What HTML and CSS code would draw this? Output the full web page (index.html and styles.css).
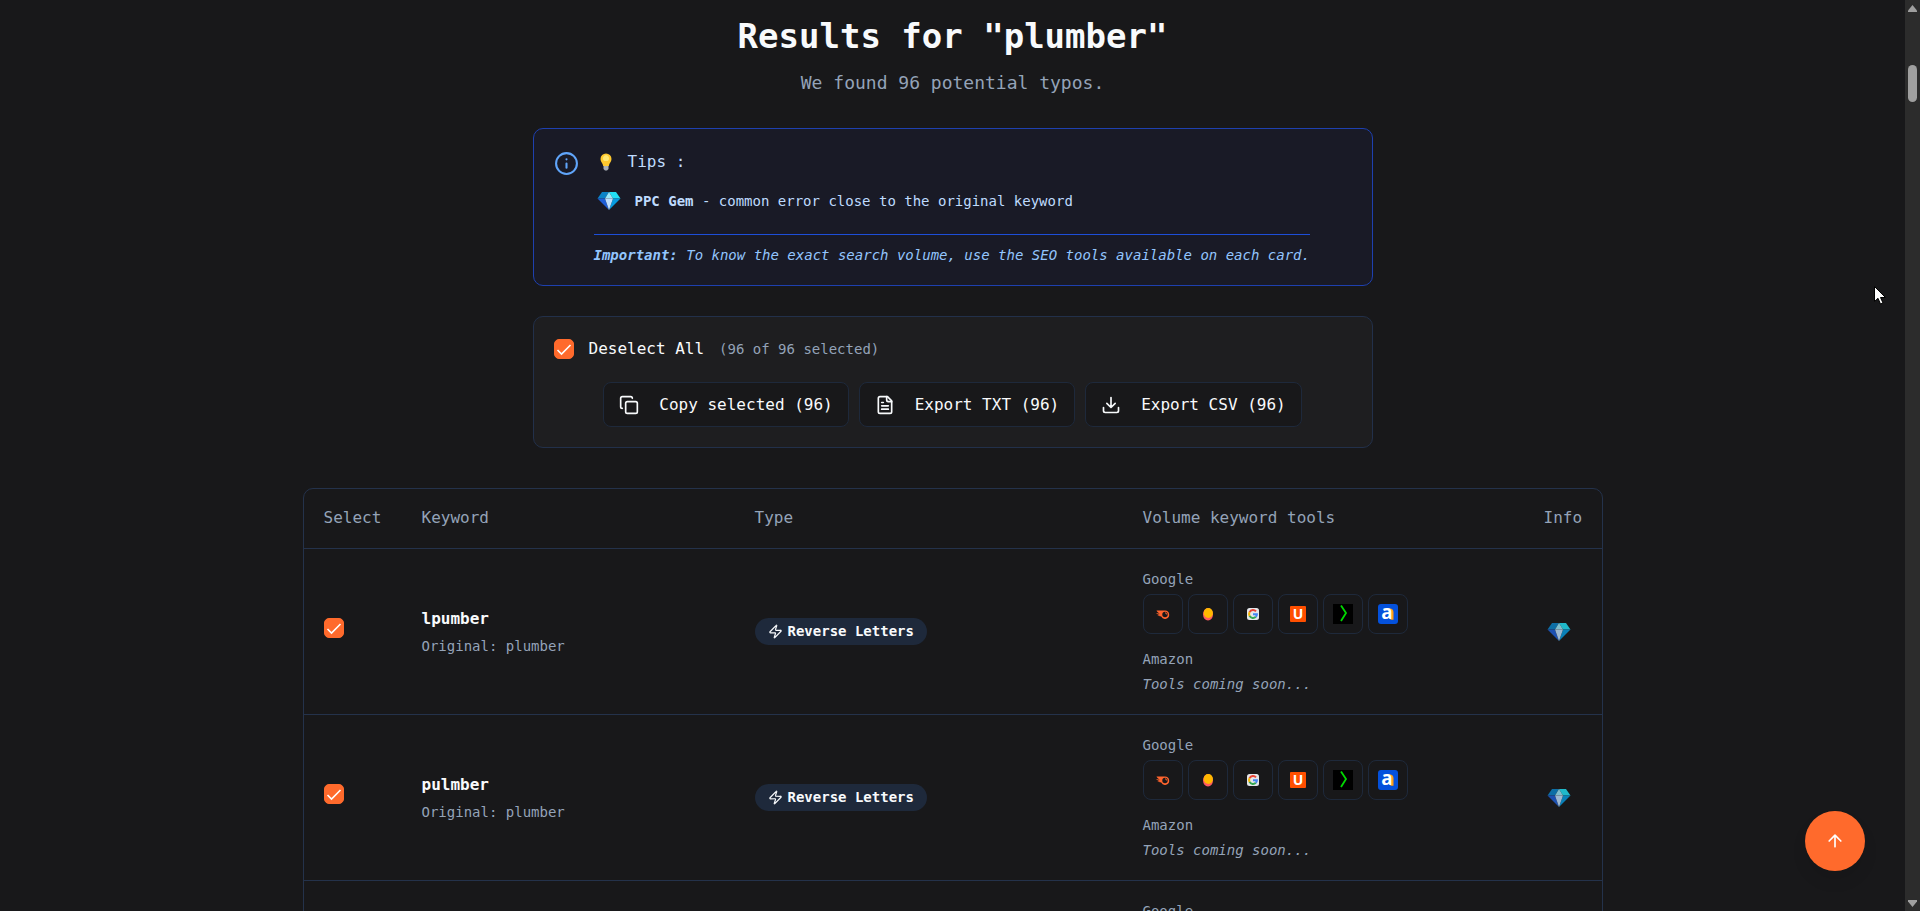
FILE: index.html
```
<!DOCTYPE html>
<html lang="en">

<head>
  <meta charset="UTF-8">
  <meta name="viewport" content="width=device-width, initial-scale=1.0">
  <title>Results for "plumber"</title>
  <link rel="stylesheet" href="styles.css">
</head>

<body>
  <svg class="sprite" aria-hidden="true">
    <symbol id="gem" viewBox="0 0 24 20">
      <path d="M5 1h7L8 7.5H.5z" fill="#0b84c8" />
      <path d="M12 1h7l4.500 6.500H16z" fill="#22e0f5" />
      <path d="M.5 7.500H8L12 19z" fill="#1f5fd6" />
      <path d="M16 7.500h7.500L12 19z" fill="#069be0" />
      <path d="M12 1l4 6.500H8z" fill="#9be8fb" />
      <path d="M8 7.500h8L12 19z" fill="#bfe0ff" />
    </symbol>
    <symbol id="zap" viewBox="0 0 24 24">
      <path d="M4 14a1 1 0 0 1-.78-1.630l9.900-10.200a.5.5 0 0 1 .86.460l-1.920 6.020A1 1 0 0 0 13 10h7a1 1 0 0 1 .78 1.630l-9.900 10.200a.5.5 0 0 1-.86-.460l1.920-6.020A1 1 0 0 0 11 14z" fill="none" stroke="currentColor" stroke-width="2" stroke-linejoin="round" />
    </symbol>
    <symbol id="semrush" viewBox="0 0 20 20">
      <path d="M3.500 6.500h8.500a4.200 4.200 0 1 1-3.800 6c-1.700-.2-3-.7-4-1.300 1 .1 2 .1 2.600-.1-1.500-.4-3-1.200-4-2 1.500.4 3 .6 4 .4-1.400-.6-2.700-1.700-3.300-3z" fill="#ff642d" />
      <circle cx="12" cy="10.500" r="2.700" fill="#18181a" />
      <path d="M12 8.800a1.700 1.700 0 0 1 1.700 1.700" fill="none" stroke="#ff642d" stroke-width="1" />
    </symbol>
    <symbol id="suggest" viewBox="0 0 20 20">
      <ellipse cx="10" cy="10.300" rx="5" ry="6.200" fill="#ff5a5f" />
      <ellipse cx="10.300" cy="9" rx="4.600" ry="5" fill="#ffb800" />
    </symbol>
    <symbol id="trends" viewBox="0 0 20 20">
      <rect x="4" y="4" width="12" height="12" rx="2.500" fill="#e4e6ea" />
      <g fill="none" stroke-width="2">
        <path d="M13 7.400A3.900 3.900 0 0 0 6.600 8.100" stroke="#ea4335" />
        <path d="M6.600 8.100a3.900 3.900 0 0 0 0 3.800" stroke="#f4b400" />
        <path d="M6.600 11.900a3.900 3.900 0 0 0 6.200.9" stroke="#34a853" />
        <path d="M12.800 12.800a3.900 3.900 0 0 0 1.100-2.600H10" stroke="#4285f4" />
      </g>
    </symbol>
    <symbol id="ubersuggest" viewBox="0 0 20 20">
      <rect x="2" y="2" width="16" height="16" rx="1" fill="#ff4f00" />
      <text x="10" y="15" class="mark mark-u">U</text>
    </symbol>
    <symbol id="chevron" viewBox="0 0 20 20">
      <path d="M0 0h20v20H0z" fill="#000" />
      <path d="M8 1.500l5 7.500-5 8" fill="none" stroke="#00d800" stroke-width="1.800" />
    </symbol>
    <symbol id="answer" viewBox="0 0 20 20">
      <rect width="20" height="20" rx="3" fill="#0451dc" />
      <path d="M11 4.500q4.500-.5 4.500 4v7.300h-3z" fill="#ff9c1a" />
      <text x="9" y="15" class="mark mark-a">a</text>
    </symbol>
  </svg>

  <main>
    <header class="results-header">
      <h1>Results for "plumber"</h1>
      <p>We found 96 potential typos.</p>
    </header>

    <section class="panel tips">
      <svg class="info-icon" viewBox="0 0 24 24" fill="none" stroke="currentColor" stroke-width="2" stroke-linecap="round">
        <circle cx="12" cy="12" r="10" />
        <path d="M12 16v-4M12 8h.01" />
      </svg>
      <div>
        <h2>
          <svg class="bulb" viewBox="0 0 12 18">
            <path d="M6 .5a5.500 5.500 0 0 1 5.500 5.500c0 3-2.300 4-2.700 7H3.200C2.800 10 .5 9 .5 6A5.500 5.500 0 0 1 6 .5z" fill="#ffc92e" />
            <path d="M6 2a3.500 3.500 0 0 1 2 6H4a3.500 3.500 0 0 1 2-6z" fill="#ffe873" />
            <path d="M3.500 13h5v3L7 17.500H5L3.500 16z" fill="#aab0b8" />
          </svg>
          Tips :
        </h2>
        <p class="tip"><svg class="gem"><use href="#gem" /></svg><span><strong>PPC Gem</strong> - common error close to the original keyword</span></p>
        <p class="note"><strong>Important:</strong> To know the exact search volume, use the SEO tools available on each card.</p>
      </div>
    </section>

    <section class="panel actions">
      <div class="select-all">
        <input type="checkbox" id="select-all" checked>
        <label for="select-all">Deselect All</label>
        <span class="count">(96 of 96 selected)</span>
      </div>
      <div class="buttons">
        <button type="button">
          <svg class="icon" viewBox="0 0 24 24">
            <rect x="8" y="8" width="14" height="14" rx="2" />
            <path d="M4 16c-1.100 0-2-.9-2-2V4c0-1.100.9-2 2-2h10c1.100 0 2 .9 2 2" />
          </svg>
          Copy selected (96)
        </button>
        <button type="button">
          <svg class="icon" viewBox="0 0 24 24">
            <path d="M15 2H6a2 2 0 0 0-2 2v16a2 2 0 0 0 2 2h12a2 2 0 0 0 2-2V7z" />
            <path d="M14 2v4a2 2 0 0 0 2 2h4M10 9H8M16 13H8M16 17H8" />
          </svg>
          Export TXT (96)
        </button>
        <button type="button">
          <svg class="icon" viewBox="0 0 24 24">
            <path d="M21 15v4a2 2 0 0 1-2 2H5a2 2 0 0 1-2-2v-4M7 10l5 5 5-5M12 15V3" />
          </svg>
          Export CSV (96)
        </button>
      </div>
    </section>

    <div class="table-wrap">
      <table>
        <colgroup>
          <col class="col-select">
          <col class="col-keyword">
          <col class="col-type">
          <col class="col-tools">
          <col class="col-info">
        </colgroup>
        <thead>
          <tr>
            <th>Select</th>
            <th>Keyword</th>
            <th>Type</th>
            <th>Volume keyword tools</th>
            <th>Info</th>
          </tr>
        </thead>
        <tbody id="rows"></tbody>
      </table>
    </div>
  </main>

  <div class="scrollbar" aria-hidden="true">
    <svg class="arrow" viewBox="0 0 9 7"><path d="M4.500 0L9 5.500V7H0V5.500z" /></svg>
    <div class="thumb"></div>
    <svg class="arrow arrow-down" viewBox="0 0 9 7"><path d="M4.500 7L9 1.500V0H0v1.500z" /></svg>
  </div>

  <button type="button" class="to-top" aria-label="Back to top">
    <svg class="icon" viewBox="0 0 24 24"><path d="M5 12l7-7 7 7M12 19V5" /></svg>
  </button>

  <svg class="cursor" viewBox="0 0 12 19" aria-hidden="true">
    <path d="M.5.5v15l3.500-3.200 2.500 5.700 2.500-1-2.500-5.500h5z" fill="#fff" stroke="#000" />
  </svg>

  <script>
    'use strict'
    const tools = ['semrush', 'suggest', 'trends', 'ubersuggest', 'chevron', 'answer']
    const keywords = ['lpumber', 'pulmber', 'plmuber']

    document.getElementById('rows').innerHTML = keywords.map((keyword) => `
      <tr>
        <td><input type="checkbox" aria-label="Select ${keyword}" checked></td>
        <td>
          <div class="keyword">${keyword}</div>
          <div class="original">Original: plumber</div>
        </td>
        <td><span class="badge"><svg><use href="#zap" /></svg>Reverse Letters</span></td>
        <td class="tools">
          <p>Google</p>
          <div class="tool-list">
            ${tools.map((tool) => `<a href="#" aria-label="${tool}"><svg><use href="#${tool}" /></svg></a>`).join('')}
          </div>
          <p>Amazon</p>
          <p class="soon">Tools coming soon...</p>
        </td>
        <td class="info"><svg class="gem"><use href="#gem" /></svg></td>
      </tr>`).join('')
  </script>
</body>

</html>
```
FILE: styles.css
```
* {
  box-sizing: border-box;
  margin: 0;
}

body {
  display: flex;
  height: 100vh;
  overflow: hidden;
  background: #18181a;
  color: #f8fafc;
  font: 16px/24px "DejaVu Sans Mono", "Liberation Mono", monospace;
}

main {
  flex: 1;
  padding: 12px 20px 0;
}

svg {
  display: block;
  flex: none;
}

.sprite {
  display: none;
}

.icon {
  width: 20px;
  height: 20px;
  fill: none;
  stroke: currentColor;
  stroke-width: 2;
  stroke-linecap: round;
  stroke-linejoin: round;
}

.gem {
  width: 24px;
  height: 20px;
}

.results-header {
  text-align: center;
}

h1 {
  font-size: 34px;
  line-height: 48px;
}

.results-header p {
  margin-top: 8px;
  color: #94a3b8;
  font-size: 18px;
  line-height: 30px;
}

.panel {
  max-width: 840px;
  margin: 30px auto 0;
  padding: 20px;
  border: 1px solid #22304a;
  border-radius: 10px;
}

.tips {
  display: flex;
  gap: 15px;
  border-color: #1e40af;
  background: #191a26;
  color: #bfdbfe;
}

.info-icon {
  width: 25px;
  height: 25px;
  margin-top: 2px;
  color: #60a5fa;
}

h2 {
  display: flex;
  align-items: center;
  gap: 16px;
  padding-left: 6px;
  font-size: 16px;
  font-weight: normal;
  line-height: 25px;
}

.bulb {
  width: 12px;
  height: 18px;
}

.tip {
  display: flex;
  align-items: center;
  gap: 14px;
  margin: 14px 0 20px;
  padding-left: 3px;
  font-size: 14px;
  line-height: 26px;
}

.note {
  padding-top: 10px;
  border-top: 1px solid #1d4ed8;
  color: #93c5fd;
  font-size: 14px;
  font-style: italic;
  line-height: 20px;
}

.actions {
  background: #1e1e20;
}

.select-all {
  display: flex;
  align-items: center;
  gap: 15px;
  line-height: 24px;
}

.count {
  color: #94a3b8;
  font-size: 14px;
}

input[type="checkbox"] {
  display: block;
  appearance: none;
  width: 20px;
  height: 20px;
  border: 1px solid #ff6a2c;
  border-radius: 5px;
}

input[type="checkbox"]:checked {
  background: #ff6a2c url("data:image/svg+xml,%3Csvg xmlns='http://www.w3.org/2000/svg' viewBox='0 0 20 20'%3E%3Cpath d='M3.5 11l4 4 9-9' fill='none' stroke='white' stroke-width='1.6'/%3E%3C/svg%3E") center / 20px;
}

.buttons {
  display: flex;
  justify-content: center;
  gap: 10px;
  margin-top: 21px;
}

.buttons button {
  display: flex;
  align-items: center;
  gap: 20px;
  height: 45px;
  padding: 0 15px;
  border: 1px solid #1e293b;
  border-radius: 8px;
  background: #18181a;
  color: inherit;
  font: inherit;
}

.table-wrap {
  max-width: 1300px;
  margin: 40px auto 0;
  border: 1px solid #24324b;
  border-radius: 10px;
}

table {
  width: 100%;
  border-collapse: collapse;
  table-layout: fixed;
}

.col-select {
  width: 98px;
}

.col-keyword {
  width: 333px;
}

.col-type {
  width: 388px;
}

.col-tools {
  width: 401px;
}

.col-info {
  width: 78px;
}

tr {
  border-bottom: 1px solid #24324b;
}

th {
  height: 59px;
  padding: 0 0 0 20px;
  color: #94a3b8;
  font-weight: normal;
  text-align: left;
}

td {
  padding: 20px 0 20px 20px;
  vertical-align: middle;
}

td input[type="checkbox"] {
  margin-bottom: 6px;
}

.keyword {
  font-weight: bold;
}

.original {
  margin-top: 5px;
  color: #94a3b8;
  font-size: 14px;
  line-height: 20px;
}

.badge {
  display: flex;
  align-items: center;
  gap: 5px;
  width: fit-content;
  height: 27px;
  padding: 0 13px;
  border-radius: 14px;
  background: #1e293b;
  font-size: 14px;
  font-weight: bold;
}

.badge svg {
  width: 15px;
  height: 15px;
}

.tools p {
  color: #94a3b8;
  font-size: 14px;
  line-height: 20px;
}

.tools .soon {
  margin-top: 5px;
  font-style: italic;
}

.tool-list {
  display: flex;
  gap: 5px;
  margin: 5px 0 15px;
}

.tool-list a {
  display: flex;
  align-items: center;
  justify-content: center;
  width: 40px;
  height: 40px;
  border: 1px solid #1e293b;
  border-radius: 8px;
}

.tool-list svg {
  width: 20px;
  height: 20px;
}

.mark {
  fill: #fff;
  font-family: "Open Sans", sans-serif;
  font-weight: bold;
  text-anchor: middle;
}

.mark-u {
  font-size: 14px;
}

.mark-a {
  font-size: 19px;
}

.info .gem {
  margin: 2px 0 0 3px;
  opacity: 0.8;
}

.to-top {
  position: fixed;
  right: 55px;
  bottom: 40px;
  display: flex;
  align-items: center;
  justify-content: center;
  width: 60px;
  height: 60px;
  border: 0;
  border-radius: 50%;
  background: #ff6a2c;
  box-shadow: 0 10px 15px rgba(0, 0, 0, 0.08);
  color: #fff;
}

.scrollbar {
  display: flex;
  flex-direction: column;
  align-items: center;
  width: 15px;
  padding: 5px 0 4px;
  background: #2c2c2c;
}

.thumb {
  width: 9px;
  height: 37px;
  margin-top: 53px;
  border-radius: 5px;
  background: #9f9f9f;
}

.arrow {
  width: 9px;
  height: 7px;
  fill: #9f9f9f;
}

.arrow-down {
  margin-top: auto;
}

.cursor {
  position: fixed;
  top: 286px;
  left: 1874px;
  width: 12px;
  height: 19px;
}
```
